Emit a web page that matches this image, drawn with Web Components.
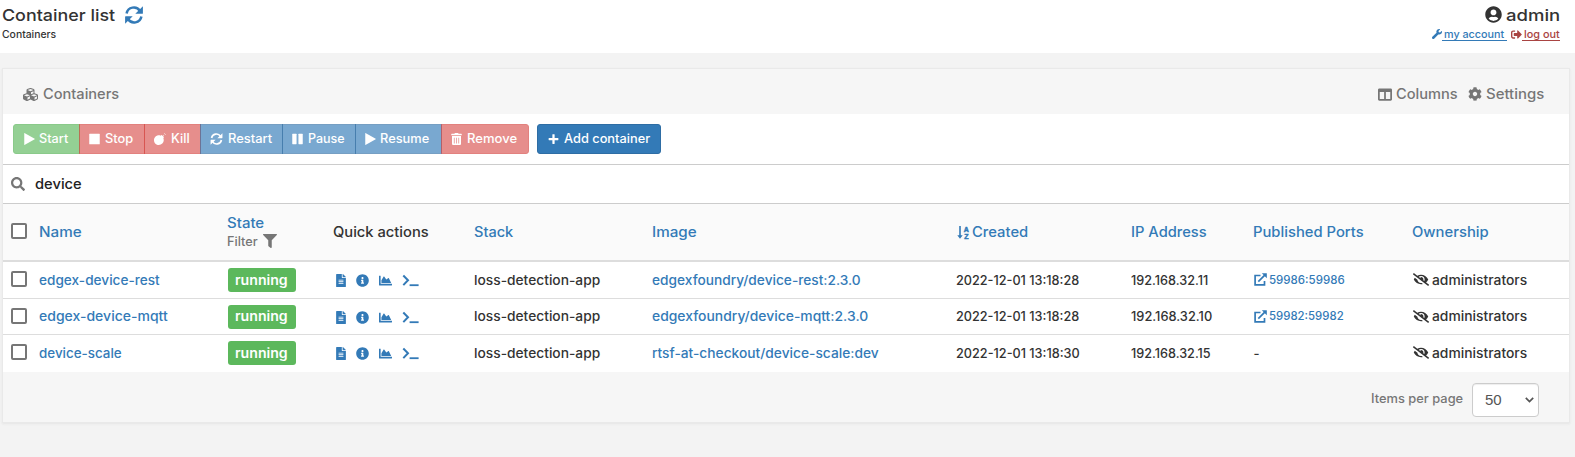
<!DOCTYPE html>
<html lang="en">
<head>
<meta charset="utf-8">
<title>Container list</title>
<style>
html,body{margin:0;height:100%;background:#f3f3f3}
body{font:500 13px/18px Inter,"Open Sans",sans-serif;color:#333;overflow:hidden}
</style>
</head>
<body>
<container-page></container-page>
<script>
const P = {
play:['0 0 448 512','<path d="M0 0v512q0 8 8 3L446 264q6-8 0-14L8-3q-8-4-8 3z"/>'],
stop:['0 0 448 512','<rect y="32" width="448" height="448" rx="16"/>'],
pause:['0 0 448 512','<rect y="32" width="184" height="448" rx="18"/><rect x="264" y="32" width="184" height="448" rx="18"/>'],
plus:['0 0 448 512','<path d="M416 208H272V64q0-16-16-16h-64q-16 0-16 16v144H32q-16 0-16 16v64q0 16 16 16h144v144q0 16 16 16h64q16 0 16-16V304h144q16 0 16-16v-64q0-16-16-16z"/>'],
trash:['0 0 448 512','<path d="M32 464a48 48 0 0 0 48 48h288a48 48 0 0 0 48-48V128H32zm272-256a16 16 0 0 1 32 0v224a16 16 0 0 1-32 0zm-96 0a16 16 0 0 1 32 0v224a16 16 0 0 1-32 0zm-96 0a16 16 0 0 1 32 0v224a16 16 0 0 1-32 0zM432 32H312l-9.4-18.7A24 24 0 0 0 281.1 0H166.8a23.72 23.72 0 0 0-21.4 13.3L136 32H16A16 16 0 0 0 0 48v32a16 16 0 0 0 16 16h416a16 16 0 0 0 16-16V48a16 16 0 0 0-16-16z"/>'],
bomb:['0 0 512 512','<path d="M440.5 88.5l-52 52L415 167c9.4 9.4 9.4 24.6 0 33.9l-17.4 17.4c11.8 26.1 18.4 55.1 18.4 85.6 0 114.9-93.1 208-208 208S0 418.9 0 304 93.1 96 208 96c30.5 0 59.5 6.6 85.6 18.4L311 97c9.4-9.4 24.6-9.4 33.9 0l26.500 26.500 52-52zM500 60h-24a12 12 0 0 0 0 24h24a12 12 0 0 0 0-24zM440 0a12 12 0 0 0-12 12v24a12 12 0 0 0 24 0V12a12 12 0 0 0-12-12z"/>'],
search:['0 0 512 512','<path d="M505 442.700L405.300 343c-4.500-4.500-10.600-7-17-7H372c27.600-35.300 44-79.700 44-128C416 93.100 322.900 0 208 0S0 93.100 0 208s93.100 208 208 208c48.300 0 92.700-16.400 128-44v16.300c0 6.400 2.500 12.500 7 17l99.700 99.700c9.400 9.400 24.600 9.400 33.900 0l28.300-28.300c9.400-9.400 9.400-24.600.1-34zM208 336c-70.700 0-128-57.200-128-128 0-70.700 57.200-128 128-128 70.700 0 128 57.200 128 128 0 70.700-57.200 128-128 128z"/>'],
info:['0 0 512 512','<path d="M256 8C119.043 8 8 119.083 8 256c0 136.997 111.043 248 248 248s248-111.003 248-248C504 119.083 392.957 8 256 8zm0 110c23.196 0 42 18.804 42 42s-18.804 42-42 42-42-18.804-42-42 18.804-42 42-42zm56 254c0 6.627-5.373 12-12 12h-88c-6.627 0-12-5.373-12-12v-24c0-6.627 5.373-12 12-12h12v-64h-12c-6.627 0-12-5.373-12-12v-24c0-6.627 5.373-12 12-12h64c6.627 0 12 5.373 12 12v100h12c6.627 0 12 5.373 12 12v24z"/>'],
file:['0 0 384 512','<path d="M224 136V0H24C10.700 0 0 10.700 0 24v464c0 13.300 10.700 24 24 24h336c13.300 0 24-10.700 24-24V160H248c-13.200 0-24-10.800-24-24zm64 236c0 6.600-5.400 12-12 12H108c-6.600 0-12-5.400-12-12v-8c0-6.600 5.400-12 12-12h168c6.600 0 12 5.400 12 12v8zm0-64c0 6.600-5.400 12-12 12H108c-6.600 0-12-5.400-12-12v-8c0-6.600 5.400-12 12-12h168c6.600 0 12 5.400 12 12v8zm0-72v8c0 6.600-5.400 12-12 12H108c-6.600 0-12-5.400-12-12v-8c0-6.600 5.400-12 12-12h168c6.600 0 12 5.400 12 12zm96-114.100v6.100H256V0h6.100c6.400 0 12.500 2.500 17 7l97.900 98c4.500 4.500 7 10.600 7 16.900z"/>'],
chart:['0 0 512 512','<path d="M500 384c6.600 0 12 5.400 12 12v40c0 6.600-5.400 12-12 12H12c-6.600 0-12-5.400-12-12V76c0-6.600 5.400-12 12-12h40c6.600 0 12 5.400 12 12v308h436zM372.700 159.500L288 216l-85.300-113.700c-5.100-6.800-15.500-6.300-19.900 1L96 248v104h384l-89.900-187.800c-3.200-6.500-11.400-8.700-17.400-4.700z"/>'],
term:['0 0 17 13','<path d="M1.300 1.500L6 6.300 1.300 11.100" fill="none" stroke="currentColor" stroke-width="2"/><rect x="7.600" y="10.300" width="9" height="1.800"/>'],
filter:['0 0 512 512','<path d="M487.976 0H24.028C2.710 0-8.047 25.866 7.058 40.971L192 225.941V432c0 7.831 3.821 15.170 10.237 19.662l80 55.980C298.020 518.690 320 507.493 320 487.980V225.941l184.947-184.970C520.021 25.896 509.338 0 487.976 0z"/>'],
cog:['0 0 512 512','<path d="M487.400 315.700l-42.600-24.600c4.300-23.200 4.300-47 0-70.200l42.600-24.600c4.900-2.800 7.100-8.600 5.500-14-11.100-35.600-30-67.800-54.700-94.600-3.800-4.100-10-5.100-14.800-2.300L380.800 110c-17.900-15.400-38.500-27.300-60.800-35.100V25.800c0-5.600-3.900-10.500-9.400-11.700-36.700-8.200-74.300-7.800-109.200 0-5.500 1.200-9.400 6.100-9.400 11.700V75c-22.200 7.900-42.800 19.800-60.800 35.100L88.700 85.500c-4.900-2.800-11-1.900-14.800 2.300-24.700 26.700-43.600 58.900-54.700 94.600-1.700 5.400.6 11.200 5.500 14L67.300 221c-4.300 23.200-4.300 47 0 70.200l-42.600 24.600c-4.900 2.800-7.100 8.600-5.500 14 11.100 35.600 30 67.800 54.700 94.600 3.800 4.100 10 5.100 14.800 2.300l42.600-24.600c17.900 15.400 38.500 27.300 60.800 35.100v49.200c0 5.600 3.900 10.500 9.400 11.700 36.700 8.200 74.300 7.800 109.200 0 5.500-1.200 9.400-6.100 9.400-11.700v-49.200c22.200-7.900 42.800-19.800 60.800-35.100l42.600 24.600c4.900 2.800 11 1.900 14.800-2.300 24.700-26.700 43.600-58.900 54.700-94.600 1.500-5.500-.7-11.300-5.600-14.100zM256 336c-44.100 0-80-35.900-80-80s35.900-80 80-80 80 35.900 80 80-35.900 80-80 80z"/>'],
columns:['0 0 512 512','<path d="M464 32H48C21.490 32 0 53.490 0 80v352c0 26.510 21.490 48 48 48h416c26.510 0 48-21.490 48-48V80c0-26.510-21.490-48-48-48zM224 416H64V160h160v256zm224 0H288V160h160v256z"/>'],
user:['0 0 496 512','<path d="M248 8C111 8 0 119 0 256s111 248 248 248 248-111 248-248S385 8 248 8zm0 96c48.600 0 88 39.400 88 88s-39.400 88-88 88-88-39.400-88-88 39.400-88 88-88zm0 344c-58.700 0-111.300-26.600-146.500-68.200 18.800-35.400 55.600-59.800 98.500-59.800 2.400 0 4.800.4 7.100 1.100 13 4.200 26.600 6.900 40.900 6.900 14.300 0 28-2.700 40.900-6.900 2.300-.7 4.700-1.100 7.100-1.100 42.900 0 79.700 24.400 98.500 59.800C359.300 421.400 306.700 448 248 448z"/>'],
wrench:['0 0 512 512','<path d="M507.730 109.100c-2.240-9.030-13.540-12.090-20.120-5.510l-74.360 74.360-67.880-11.310-11.310-67.880 74.360-74.360c6.620-6.620 3.430-17.900-5.660-20.160-47.380-11.740-99.550.91-136.580 37.930-39.640 39.640-50.550 97.100-34.050 147.200L18.740 402.760c-24.990 24.990-24.990 65.510 0 90.500 24.990 24.990 65.510 24.990 90.500 0l213.210-213.210c50.120 16.710 107.470 5.680 147.370-34.220 37.070-37.070 49.700-89.320 37.910-136.730z"/>'],
out:['0 0 512 512','<path d="M497 273L329 441c-15 15-41 4.500-41-17v-96H152c-13.300 0-24-10.700-24-24v-96c0-13.300 10.700-24 24-24h136V88c0-21.400 25.900-32 41-17l168 168c9.300 9.400 9.300 24.600 0 34zM192 436v-40c0-6.600-5.400-12-12-12H96c-17.700 0-32-14.300-32-32V160c0-17.700 14.300-32 32-32h84c6.600 0 12-5.400 12-12V76c0-6.600-5.400-12-12-12H96c-53 0-96 43-96 96v192c0 53 43 96 96 96h84c6.600 0 12-5.400 12-12z"/>'],
eye:['0 0 640 512','<path d="M320 400c-75.850 0-137.250-58.710-142.900-133.110L72.200 185.820c-13.790 17.300-26.480 35.590-36.720 55.590a32.350 32.350 0 0 0 0 29.190C89.710 376.410 197.070 448 320 448c26.910 0 52.870-4 77.890-10.460L346 397.390a144.130 144.130 0 0 1-26 2.610zm313.820 58.100l-110.550-85.440a331.250 331.250 0 0 0 81.250-102.070 32.350 32.350 0 0 0 0-29.190C550.290 135.590 442.930 64 320 64a308.150 308.150 0 0 0-147.320 37.700L45.460 3.370A16 16 0 0 0 23 6.180L3.370 31.450A16 16 0 0 0 6.180 53.900l588.360 454.730a16 16 0 0 0 22.460-2.810l19.640-25.270a16 16 0 0 0-2.820-22.450zm-183.720-142l-39.300-30.380A94.750 94.750 0 0 0 416 256a94.760 94.760 0 0 0-121.310-92.210A47.650 47.650 0 0 1 304 192a46.640 46.640 0 0 1-1.540 10l-73.610-56.890A142.310 142.310 0 0 1 320 112a143.920 143.920 0 0 1 144 144c0 21.630-5.290 41.790-13.900 60.110z"/>'],
cubes:['0 0 512 512','<path d="M488.600 250.200L392 214V105.500c0-15-9.300-28.400-23.400-33.700l-100-37.500c-8.100-3.100-17.100-3.100-25.300 0l-100 37.500c-14.100 5.300-23.400 18.700-23.400 33.700V214l-96.600 36.200C9.300 255.500 0 268.900 0 283.900V394c0 13.600 7.700 26.100 19.900 32.200l100 50c10.100 5.100 22.100 5.100 32.200 0l103.900-52 103.900 52c10.100 5.100 22.100 5.100 32.200 0l100-50c12.200-6.100 19.900-18.600 19.900-32.200V283.900c0-15-9.300-28.400-23.400-33.700zM358 214.800l-85 31.900v-68.200l85-37v73.300zM154 104.100l102-38.200 102 38.200v.6l-102 41.400-102-41.400v-.6zm84 291.100l-85 42.500v-79.100l85-38.800v75.400zm0-112l-102 41.400-102-41.400v-.6l102-38.200 102 38.200v.6zm240 112l-85 42.500v-79.100l85-38.800v75.400zm0-112l-102 41.400-102-41.400v-.6l102-38.200 102 38.200v.6z"/>'],
sync:['0 0 18 18','<g fill="none" stroke="currentColor" stroke-width="2.500"><path d="M1.600 7.500A7.300 7.300 0 0 1 15 5"/><path d="M16.400 10.500A7.300 7.300 0 0 1 3 13"/></g><path d="M17.900.3v6.900q0 .6-.6.6h-7zM.1 17.700v-6.900q0-.6.6-.6h7z"/>'],
ext:['0 0 13 13','<g fill="none" stroke="currentColor" stroke-width="1.700"><path d="M6.500 2.500H1.100v9.400h9.400V8"/><path d="M4.300 8.700l7-7"/></g><path d="M7.800.2h5v5z"/>'],
sort:['0 0 13 13','<path d="M2.200 0h1.600v9.200h1.900L3 12.700.3 9.200h1.900z"/><g stroke="currentColor" stroke-width=".5" font-size="7" font-weight="700" font-family="Liberation Sans"><text x="6.800" y="5.700">A</text><text x="7.200" y="12.500">Z</text></g>'],
chev:['0 0 9 6','<path d="M.8.8l3.700 3.700L8.200.8" fill="none" stroke="currentColor" stroke-width="1.700"/>']
};

/* Base element: fills an open shadow root with styles and markup. */
class Base extends HTMLElement{
  constructor(){super();this.attachShadow({mode:'open'})}
  connectedCallback(){this.shadowRoot.innerHTML=`<style>*{box-sizing:border-box}${this.css()}</style>${this.html()}`;this.ready&&this.ready()}
  a(n,d=''){return this.getAttribute(n)??d}
}
customElements.define('ui-icon',class extends Base{
  css(){return `:host{display:block;flex:none;width:${this.a('w')}px;height:${this.a('h')}px;margin-right:${this.a('gap','0')}px}svg{display:block;width:100%;height:100%;fill:currentColor;overflow:visible}`}
  html(){const p=P[this.a('name')];return `<svg viewBox="${p[0]}">${p[1]}</svg>`}
});
customElements.define('ui-text',class extends Base{
  css(){return `:host{display:block;flex:none;width:${this.a('w')}px;font-size:${this.a('size','13')}px;white-space:nowrap}span{display:inline-block;transform-origin:0 50%;margin-left:-.7px}`}
  html(){return '<span><slot></slot></span>'}
  ready(){const s=this.shadowRoot.querySelector('span'),w=+this.a('w')+.7;
    s.style.transform=`scaleX(${w/s.getBoundingClientRect().width})`}
});
customElements.define('check-box',class extends Base{
  css(){return ':host{display:block;width:16px;height:16px;border:2px solid #767676;border-radius:2px;background:#fff}'}
  html(){return ''}
});
customElements.define('tool-button',class extends Base{
  css(){return `:host{display:flex;align-items:center;flex:none;box-sizing:border-box;height:30px;width:${this.a('w')}px;padding-left:${this.a('pad','9')}px;color:#fff;border:1px solid;margin-left:-1px;opacity:.65}
  :host([kind=success]){background:#5cb85c;border-color:#4cae4c}
  :host([kind=danger]){background:#d9534f;border-color:#d43f3a}
  :host([kind=primary]){background:#337ab7;border-color:#2e6da4}
  :host([first]){border-radius:3px 0 0 3px;margin-left:0}
  :host([last]){border-radius:0 3px 3px 0}
  :host([solo]){border-radius:3px;margin-left:8px;opacity:1}`}
  html(){return `<ui-icon name="${this.a('icon')}" w="${this.a('iw')}" h="${this.a('ih','12')}" gap="${this.a('gap','5')}"></ui-icon><ui-text size="12.500" w="${this.a('tw')}">${this.textContent}</ui-text>`}
});
customElements.define('state-badge',class extends Base{
  css(){return ':host{display:flex;align-items:center;padding-left:8px;width:68px;height:24px;border-radius:3px;background:#5cb85c;color:#fff;box-sizing:border-box;font-weight:600}ui-text{margin-top:-1px}'}
  html(){return `<ui-text w="52" size="13">running</ui-text>`}
});
const GRID='display:grid;grid-template-columns:29px 188px 106px 140.500px 178px 304px 175.500px 121.500px 159.500px 1fr;align-items:center;padding-left:8px;';
customElements.define('container-row',class extends Base{
  css(){return `:host{${GRID}box-sizing:border-box;height:${this.a('h')}px;padding-bottom:1px;background:#fff;border-bottom:1px solid #ddd}:host([last]){border-bottom:0;padding-bottom:2px}
  state-badge{position:relative;top:.5px}check-box{margin-top:-1px}
  .l{color:#337ab7}.f{display:flex;align-items:center}.q{padding-left:2px;padding-top:2px}`}
  html(){const t=(k,s=13)=>{const[v,w]=this.a(k).split('|');return `<ui-text w="${w}" size="${s}">${v}</ui-text>`};
  return `<check-box></check-box><div class="l">${t('name')}</div><state-badge></state-badge>
  <div class="f q l"><ui-icon name="file" w="10" h="13" gap="10"></ui-icon><ui-icon name="info" w="13" h="13" gap="10"></ui-icon><ui-icon name="chart" w="13" h="13" gap="9.500"></ui-icon><ui-icon name="term" w="17" h="13"></ui-icon></div>
  ${t('stack')}<div class="l">${t('image')}</div>${t('created')}${t('ip')}
  ${this.hasAttribute('port')?`<div class="f l"><ui-icon name="ext" w="13" h="13" gap="3.500"></ui-icon>${t('port',11.5)}</div>`:'<div>-</div>'}
  <div class="f"><ui-icon name="eye" w="16" h="13" gap="3.500"></ui-icon><ui-text w="94.500">administrators</ui-text></div>`}
});
customElements.define('table-head',class extends Base{
  css(){return `:host{${GRID}box-sizing:border-box;height:58px;background:#fafafa;border-bottom:2px solid #ddd;color:#337ab7}.d{color:#333}.f{display:flex;align-items:center}.g{color:#767676;height:21px}.st{padding-top:2px}`}
  html(){const t=(v,w)=>`<ui-text size="14" w="${w}">${v}</ui-text>`;
  return `<check-box style="margin-top:-2px"></check-box>${t('Name',42)}<div class="st">${t('State',36.5)}<div class="f g"><ui-text size="12.500" w="30" style="margin-right:4.500px">Filter</ui-text><ui-icon name="filter" w="14" h="14" style="margin-top:-2px"></ui-icon></div></div>
  <div class="d">${t('Quick actions',95)}</div>${t('Stack',38.5)}${t('Image',44)}<div class="f"><ui-icon name="sort" w="13" h="13" gap="3.500"></ui-icon>${t('Created',55.5)}</div>${t('IP Address',75)}${t('Published Ports',110)}${t('Ownership',76)}`}
});
customElements.define('page-header',class extends Base{
  css(){return `:host{display:flex;justify-content:space-between;height:53px;background:#fff;box-sizing:border-box;padding:6px 15px 0 2.500px}
  .f{display:flex;align-items:center;height:18px}.r{display:flex;flex-direction:column;align-items:flex-end}.s{margin-top:1px;line-height:13px}
  .a{color:#337ab7}.b{color:#a94442}.u{border-bottom:1px solid;height:13px;padding-left:3px}.a .u{padding-right:2.500px}a{display:flex;align-items:center}.b{margin-left:4.500px}`}
  html(){return `<div><div class="f"><ui-text size="16.500" w="112.500" style="margin-right:10px">Container list</ui-text><ui-icon class="a" name="sync" w="18" h="18"></ui-icon></div><div class="f s"><ui-text size="10.200" w="53.500">Containers</ui-text></div></div>
  <div class="r"><div class="f"><ui-icon name="user" w="17" h="17" gap="5" style="margin-top:-1px"></ui-icon><ui-text size="16.500" w="53.500">admin</ui-text></div>
  <div class="f s"><a class="a"><ui-icon name="wrench" w="10" h="10"></ui-icon><div class="u"><ui-text size="10.500" w="59.500">my account</ui-text></div></a><a class="b"><ui-icon name="out" w="11" h="11"></ui-icon><div class="u"><ui-text size="10.500" w="35">log out</ui-text></div></a></div></div>`}
});
customElements.define('container-card',class extends Base{
  css(){return `:host{display:block;margin:16px 6px 0 3px;height:353px;background:#f6f6f6;box-shadow:0 0 0 1px #e9e9e9,0 1px 2px 1px #e5e5e5}
  .f{display:flex;align-items:center}.head{height:45px;padding:5px 25px 0 20px;color:#767676}.sp{flex:1}
  .tools{height:51px;background:#fff;border-bottom:1px solid #ccc;padding:0 0 1px 10px}
  .search{height:39px;background:#fff;border-bottom:1px solid #ccc;padding-left:8px;color:#767676}.search ui-text{color:#222}
  .foot{height:50px;padding-right:30px;justify-content:flex-end;color:#767676}.sel{display:flex;align-items:center;width:67px;height:34px;border:1px solid #ccc;border-radius:4px;background:#fff;color:#555;margin:6px 0 0 9px;padding:0 4px 0 12px;justify-content:space-between;font:15px/18px "Liberation Sans",Arial,sans-serif;box-shadow:inset 0 1px 1px #eee}`}
  html(){return `<div class="f head"><ui-icon name="cubes" w="15" h="15" gap="5.500"></ui-icon><ui-text size="14" w="75.500">Containers</ui-text><div class="sp"></div>
   <ui-icon name="columns" w="14" h="15" gap="5"></ui-icon><ui-text size="14" w="61" style="margin-right:10px">Columns</ui-text><ui-icon name="cog" w="14" h="14" gap="4.500"></ui-icon><ui-text size="14" w="57.500">Settings</ui-text></div>
  <div class="f tools">
   <tool-button first kind="success" w="67" icon="play" iw="11" gap="5" pad="10" tw="28.500">Start</tool-button>
   <tool-button kind="danger" w="66" icon="stop" iw="11" gap="5.500" tw="27.500">Stop</tool-button>
   <tool-button kind="danger" w="57" icon="bomb" iw="12" gap="6" tw="18">Kill</tool-button>
   <tool-button kind="primary" w="83" icon="sync" iw="13" ih="12" gap="5.500" tw="43.500">Restart</tool-button>
   <tool-button kind="primary" w="74" icon="pause" iw="11" gap="5.500" tw="36">Pause</tool-button>
   <tool-button kind="primary" w="87" icon="play" iw="11" gap="5" tw="48.500">Resume</tool-button>
   <tool-button last kind="danger" w="88" icon="trash" iw="11" gap="5.500" tw="49.500">Remove</tool-button>
   <tool-button solo kind="primary" w="124" icon="plus" iw="11" gap="5.500" pad="10" tw="85.500">Add container</tool-button></div>
  <div class="f search"><ui-icon name="search" w="14" h="14" gap="11"></ui-icon><ui-text size="14" w="46">device</ui-text></div>
  <table-head></table-head>
  <container-row h="37" name="edgex-device-rest|120" stack="loss-detection-app|125.500" image="edgexfoundry/device-rest:2.3.0|208" created="2022-12-01 13:18:28|122.500" ip="192.168.32.11|76.500" port="59986:59986|75"></container-row>
  <container-row h="36" name="edgex-device-mqtt|128" stack="loss-detection-app|125.500" image="edgexfoundry/device-mqtt:2.3.0|215.500" created="2022-12-01 13:18:28|122.500" ip="192.168.32.10|80.500" port="59982:59982|74"></container-row>
  <container-row h="37" last name="device-scale|82" stack="loss-detection-app|125.500" image="rtsf-at-checkout/device-scale:dev|226" created="2022-12-01 13:18:30|123" ip="192.168.32.15|79"></container-row>
  <div class="f foot"><ui-text size="12.500" w="91.500" style="margin-top:3px">Items per page</ui-text><div class="sel"><span>50</span><ui-icon name="chev" w="9" h="6"></ui-icon></div></div>`}
});
customElements.define('container-page',class extends Base{
  css(){return ':host{display:block}'}
  html(){return '<page-header></page-header><container-card></container-card>'}
});
</script>
</body>
</html>
